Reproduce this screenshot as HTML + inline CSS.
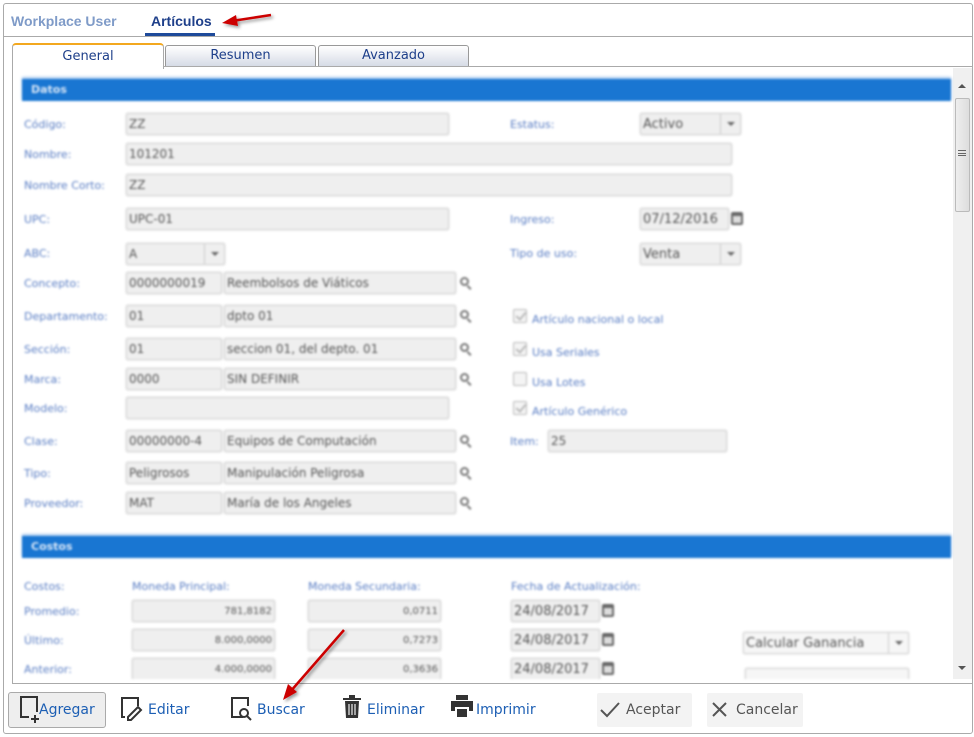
<!DOCTYPE html>
<html><head><meta charset="utf-8"><style>
*{box-sizing:border-box;margin:0;padding:0}
body{width:974px;height:737px;background:#fff;font-family:"DejaVu Sans","Liberation Sans",sans-serif;position:relative;overflow:hidden}
.a{position:absolute}
.l{position:absolute;font-size:11px;color:#5a7ec4;white-space:nowrap}
.i{position:absolute;background:#efefef;border:1px solid #d4d4d4;border-radius:2px;font-size:12px;color:#555;padding:3px 2px;height:22px;white-space:nowrap;overflow:hidden;box-shadow:0 0 2px #ddd}
.r{text-align:right;font-size:10px;padding-top:5px}
.sel .dd{position:absolute;right:0;top:0;width:20px;height:20px;border-left:1px solid #ccc}
.sel .dd:after{content:"";position:absolute;left:6px;top:8px;border:4px solid transparent;border-top:4px solid #666}
.mg{position:absolute;width:9px;height:9px;border:2px solid #777;border-radius:50%}
.mg:after{content:"";position:absolute;left:6px;top:6px;width:5px;height:2px;background:#777;transform:rotate(45deg);transform-origin:0 0}
.cal{position:absolute;width:12px;height:13px;background:#666;border-radius:2px}
.cal:after{content:"";position:absolute;left:2px;top:4px;width:8px;height:7px;background:#ddd}
.cb{position:absolute;width:14px;height:14px;border:1px solid #bbb;background:#f4f4f4;border-radius:2px}
.cb.c:after{content:"";position:absolute;left:4px;top:0px;width:4px;height:8px;border:solid #bbb;border-width:0 2px 2px 0;transform:rotate(40deg)}
.bar{position:absolute;left:22px;width:929px;height:22px;background:#1976d2;color:#d8e6f7;font-size:11px;font-weight:bold;padding:4px 9px;box-shadow:0 -2px 2px #a8c8ee}
.blur{filter:blur(1px)}
.tb{position:absolute;font-size:14px;color:#1d5fb4;top:702px;z-index:3}
</style></head><body>
<div class="a" style="left:3px;top:3px;width:970px;height:731px;border:1px solid #aaa;border-radius:3px"></div>
<div class="a" style="left:4px;top:36px;width:968px;height:1px;background:#aaa"></div>
<div class="a" style="left:11px;top:13px;font-size:13px;font-weight:bold;color:#7f9bc8;font-family:'Liberation Sans',sans-serif;font-size:14px">Workplace User</div>
<div class="a" style="left:151px;top:13px;font-size:14px;font-weight:bold;color:#1e3f8a;font-family:'Liberation Sans',sans-serif">Artículos</div>
<div class="a" style="left:145px;top:33px;width:70px;height:3px;background:#1e4a9a"></div>
<!-- tabs -->
<div class="a" style="left:12px;top:43px;width:152px;height:26px;border:1px solid #aaa;border-bottom:none;border-top:2px solid #f3a81f;border-radius:4px 4px 0 0;background:#fff;z-index:2;text-align:center;font-size:13px;color:#1e3f8a;padding-top:4px">General</div>
<div class="a" style="left:165px;top:45px;width:151px;height:22px;border:1px solid #999;border-radius:3px 3px 0 0;background:linear-gradient(#fff,#d6dbe6);text-align:center;font-size:13px;color:#1e3f8a;padding-top:2px">Resumen</div>
<div class="a" style="left:318px;top:45px;width:151px;height:22px;border:1px solid #999;border-radius:3px 3px 0 0;background:linear-gradient(#fff,#d6dbe6);text-align:center;font-size:13px;color:#1e3f8a;padding-top:2px">Avanzado</div>
<div class="a" style="left:12px;top:66px;width:961px;height:618px;border:1px solid #aaa;border-right:none"></div>
<!-- scrollbar -->
<div class="a" style="left:953px;top:68px;width:19px;height:611px;background:#f0f0f0"></div>
<div class="a" style="left:955px;top:98px;width:15px;height:114px;background:linear-gradient(90deg,#eee,#ddd);border:1px solid #bbb;border-radius:2px"></div>
<div class="a" style="left:958px;top:150px;width:8px;height:6px;border-top:1px solid #666;border-bottom:1px solid #666"></div>
<div class="a" style="left:958px;top:153px;width:8px;height:1px;background:#666"></div>
<div class="a" style="left:958px;top:80px;border:4px solid transparent;border-bottom:4px solid #555"></div>
<div class="a" style="left:958px;top:666px;border:4px solid transparent;border-top:4px solid #555"></div>
<div class="a blur" style="left:0;top:0;width:953px;height:679px;overflow:hidden">
<div class="bar" style="top:79px">Datos</div>
<div class="l" style="left:24px;top:118px">Código:</div><div class="i" style="left:126px;top:113px;width:323px">ZZ</div>
<div class="l" style="left:24px;top:148px">Nombre:</div><div class="i" style="left:126px;top:143px;width:606px">101201</div>
<div class="l" style="left:24px;top:179px">Nombre Corto:</div><div class="i" style="left:126px;top:174px;width:606px">ZZ</div>
<div class="l" style="left:24px;top:213px">UPC:</div><div class="i" style="left:126px;top:208px;width:323px">UPC-01</div>
<div class="l" style="left:24px;top:247px">ABC:</div><div class="i sel" style="left:126px;top:243px;width:99px">A<div class="dd"></div></div>
<div class="l" style="left:24px;top:277px">Concepto:</div><div class="i" style="left:126px;top:272px;width:96px">0000000019</div><div class="i" style="left:224px;top:272px;width:232px">Reembolsos de Viáticos</div><div class="mg" style="left:460px;top:277px"></div>
<div class="l" style="left:24px;top:310px">Departamento:</div><div class="i" style="left:126px;top:305px;width:96px">01</div><div class="i" style="left:224px;top:305px;width:232px">dpto 01</div><div class="mg" style="left:460px;top:310px"></div>
<div class="l" style="left:24px;top:343px">Sección:</div><div class="i" style="left:126px;top:338px;width:96px">01</div><div class="i" style="left:224px;top:338px;width:232px">seccion 01, del depto. 01</div><div class="mg" style="left:460px;top:343px"></div>
<div class="l" style="left:24px;top:373px">Marca:</div><div class="i" style="left:126px;top:368px;width:96px">0000</div><div class="i" style="left:224px;top:368px;width:232px">SIN DEFINIR</div><div class="mg" style="left:460px;top:373px"></div>
<div class="l" style="left:24px;top:402px">Modelo:</div><div class="i" style="left:126px;top:397px;width:323px"></div>
<div class="l" style="left:24px;top:435px">Clase:</div><div class="i" style="left:126px;top:430px;width:96px">00000000-4</div><div class="i" style="left:224px;top:430px;width:232px">Equipos de Computación</div><div class="mg" style="left:460px;top:435px"></div>
<div class="l" style="left:24px;top:467px">Tipo:</div><div class="i" style="left:126px;top:462px;width:96px">Peligrosos</div><div class="i" style="left:224px;top:462px;width:232px">Manipulación Peligrosa</div><div class="mg" style="left:460px;top:467px"></div>
<div class="l" style="left:24px;top:497px">Proveedor:</div><div class="i" style="left:126px;top:492px;width:96px">MAT</div><div class="i" style="left:224px;top:492px;width:232px">María de los Angeles</div><div class="mg" style="left:460px;top:497px"></div>
<div class="l" style="left:510px;top:118px">Estatus:</div><div class="i sel" style="left:640px;top:113px;width:101px;font-size:13px">Activo<div class="dd"></div></div>
<div class="l" style="left:510px;top:213px">Ingreso:</div><div class="i" style="left:640px;top:208px;width:89px;font-size:13px">07/12/2016</div><div class="cal" style="left:731px;top:212px"></div>
<div class="l" style="left:510px;top:247px">Tipo de uso:</div><div class="i sel" style="left:640px;top:243px;width:101px;font-size:13px">Venta<div class="dd"></div></div>
<div class="cb c" style="left:513px;top:309px"></div><div class="l" style="left:532px;top:313px">Artículo nacional o local</div>
<div class="cb c" style="left:513px;top:342px"></div><div class="l" style="left:532px;top:346px">Usa Seriales</div>
<div class="cb" style="left:513px;top:372px"></div><div class="l" style="left:532px;top:376px">Usa Lotes</div>
<div class="cb c" style="left:513px;top:401px"></div><div class="l" style="left:532px;top:405px">Artículo Genérico</div>
<div class="l" style="left:510px;top:435px">Item:</div><div class="i" style="left:548px;top:430px;width:179px">25</div>
<div class="bar" style="top:536px">Costos</div>
<div class="l" style="left:24px;top:580px">Costos:</div><div class="l" style="left:132px;top:580px">Moneda Principal:</div><div class="l" style="left:308px;top:580px">Moneda Secundaria:</div><div class="l" style="left:511px;top:580px">Fecha de Actualización:</div>
<div class="l" style="left:24px;top:605px">Promedio:</div><div class="i r" style="left:132px;top:600px;width:143px">781,8182</div><div class="i r" style="left:308px;top:600px;width:133px">0,0711</div><div class="i" style="left:511px;top:600px;width:89px;font-size:13px">24/08/2017</div><div class="cal" style="left:602px;top:604px"></div>
<div class="l" style="left:24px;top:634px">Último:</div><div class="i r" style="left:132px;top:629px;width:143px">8.000,0000</div><div class="i r" style="left:308px;top:629px;width:133px">0,7273</div><div class="i" style="left:511px;top:629px;width:89px;font-size:13px">24/08/2017</div><div class="cal" style="left:602px;top:633px"></div>
<div class="l" style="left:24px;top:663px">Anterior:</div><div class="i r" style="left:132px;top:658px;width:143px">4.000,0000</div><div class="i r" style="left:308px;top:658px;width:133px">0,3636</div><div class="i" style="left:511px;top:658px;width:89px;font-size:13px">24/08/2017</div><div class="cal" style="left:602px;top:662px"></div>
<div class="i sel" style="left:743px;top:632px;width:166px;font-size:13px;background:#f6f6f6">Calcular Ganancia<div class="dd"></div></div>
<div class="i" style="left:745px;top:668px;width:164px;background:#f6f6f6"></div>
</div>
<!-- toolbar -->
<div class="a" style="left:8px;top:692px;width:98px;height:36px;background:#eee;border:1px solid #aaa;border-radius:3px"></div>
<div class="a" style="left:597px;top:693px;width:95px;height:34px;background:#f3f3f3;border-radius:2px"></div>
<div class="a" style="left:707px;top:693px;width:96px;height:34px;background:#f3f3f3;border-radius:2px"></div>
<svg class="a" style="left:0;top:690px;z-index:2" width="974" height="40">
<g fill="none" stroke="#333" stroke-width="2">
<path d="M21 25V7h16v15M21 25v2h8M31 29h8M35 25v8" />
<path d="M125 27h-3V8h16v8M128 27l10-10 3 3-10 10h-3z" />
<path d="M243 27h-11V8h16v8"/><circle cx="244" cy="23" r="4"/><path d="M247 26l4 4"/>
</g>
<path fill="#333" d="M343 8h18v2h-18zM349 5h6v3h-6zM345 11h14l-1 17h-12z"/>
<path d="M349 14v11M352 14v11M355 14v11" stroke="#eee" stroke-width="1.2"/>
<path fill="#333" d="M456 5h12v5h-12zM451 11h22v10h-4v-4h-14v4h-4zM457 19h10v8h-10z"/>
<path d="M601 20l6 6 12-13" fill="none" stroke="#555" stroke-width="2"/>
<path d="M713 13l13 13M726 13l-13 13" stroke="#555" stroke-width="2"/>
</svg>
<div class="tb" style="left:39px">Agregar</div>
<div class="tb" style="left:148px">Editar</div>
<div class="tb" style="left:257px">Buscar</div>
<div class="tb" style="left:367px">Eliminar</div>
<div class="tb" style="left:476px">Imprimir</div>
<div class="tb" style="left:626px;color:#555">Aceptar</div>
<div class="tb" style="left:736px;color:#555">Cancelar</div>
<!-- arrows -->
<svg class="a" style="left:0;top:0;z-index:4" width="974" height="737">
<defs><filter id="s"><feDropShadow dx="2" dy="2" stdDeviation="1.5" flood-color="#000" flood-opacity="0.4"/></filter></defs>
<g filter="url(#s)" stroke="#c00" fill="#c00">
<path d="M271 15L232 21" stroke-width="2.5" fill="none"/><path d="M222 23l14-8 2 11z" stroke="none"/>
<path d="M344 630L290 692" stroke-width="2.5" fill="none"/><path d="M283 700l5-16 9 8z" stroke="none"/>
</g></svg>
</body></html>
